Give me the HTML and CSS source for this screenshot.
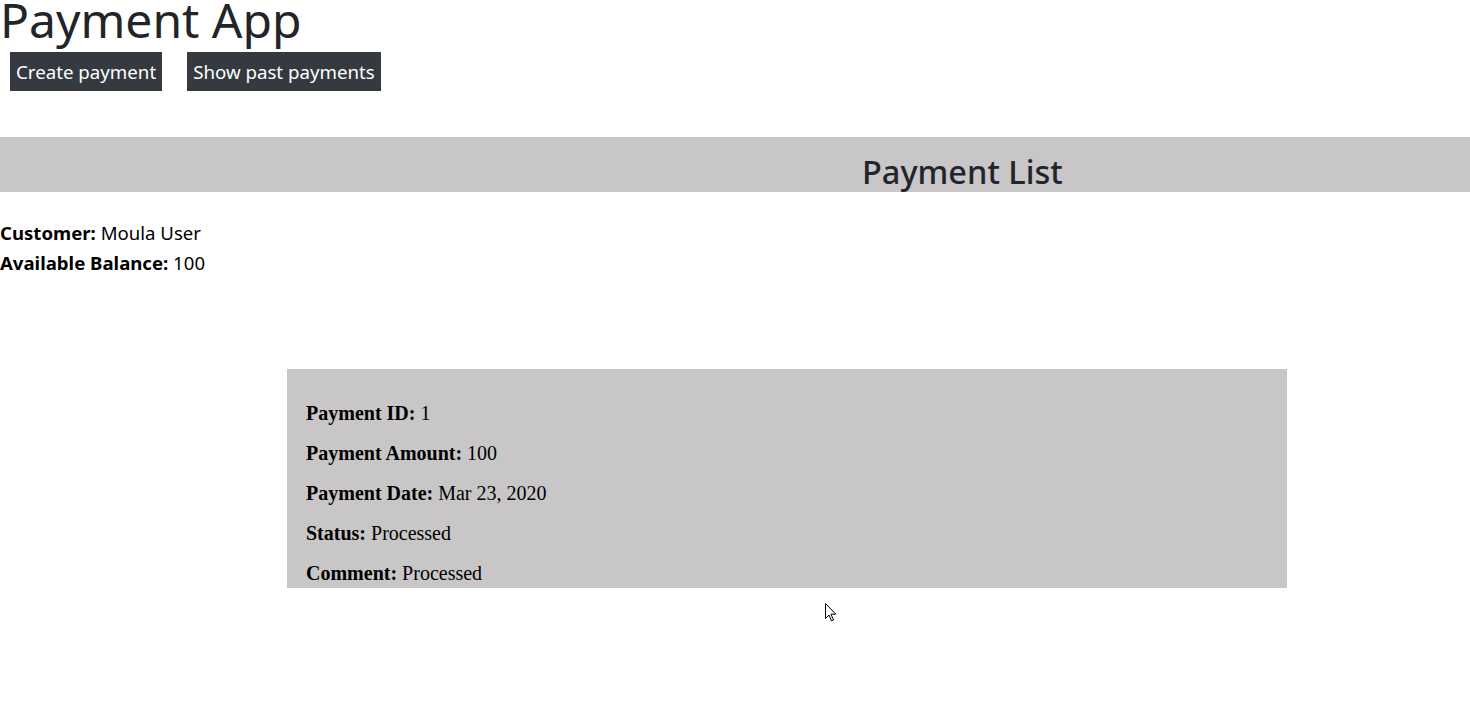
FILE: index.html
```html
<!DOCTYPE html>
<html lang="en">
<head>
<meta charset="utf-8">
<title>Payment App</title>
<link rel="stylesheet" href="styles.css">
</head>
<body>
<header class="app-header">
  <h1 class="app-title">Payment App</h1>
  <nav class="actions">
    <button class="btn">Create payment</button>
    <button class="btn">Show past payments</button>
  </nav>
</header>
<section class="list-banner">
  <h2 class="list-title">Payment List</h2>
</section>
<section class="customer">
  <div class="customer-line"><strong>Customer:</strong> Moula User</div>
  <div class="customer-line"><strong>Available Balance:</strong> 100</div>
</section>
<main class="payments">
  <article class="payment-card">
    <p class="field"><b>Payment ID:</b> 1</p>
    <p class="field"><b>Payment Amount:</b> 100</p>
    <p class="field"><b>Payment Date:</b> Mar 23, 2020</p>
    <p class="field"><b>Status:</b> Processed</p>
    <p class="field"><b>Comment:</b> Processed</p>
  </article>
</main>
<svg class="cursor" width="12" height="20" viewBox="0 0 12 20"><path d="M0.5 0.5 L0.5 15.5 L4 12 L6.5 18 L8.5 17 L6 11.2 L10.8 11.2 Z" fill="#fff" stroke="#000" stroke-width="1"/></svg>
</body>
</html>
```

FILE: styles.css
```css
html, body {
  margin: 0;
  padding: 0;
  background: #fff;
}
body {
  font-family: "Noto Sans", "Open Sans", sans-serif;
  color: #212529;
  position: relative;
  min-height: 721px;
}
.app-header {
  display: flex;
  flex-direction: column;
}
.app-title {
  margin: -13px 0 0 0;
  font-size: 48px;
  font-weight: 400;
  line-height: 65px;
  color: #212529;
}
.actions {
  display: flex;
  gap: 25px;
  padding-left: 10px;
  margin-top: 0;
}
.btn {
  font-family: "Noto Sans", "Open Sans", sans-serif;
  font-size: 18.7px;
  color: #fff;
  background: #343a40;
  border: none;
  border-radius: 0;
  height: 39px;
  padding: 0 6px;
  line-height: 39px;
}
.list-banner {
  margin-top: 46px;
  background: #c8c6c7;
  height: 55px;
  overflow: hidden;
}
.list-title {
  margin: 0;
  padding-left: 862px;
  font-size: 32.5px;
  font-weight: 500;
  line-height: 70px;
  color: #212529;
}
.customer {
  margin-top: 26px;
  font-size: 18.6px;
  color: #000;
}
.customer-line {
  line-height: 30px;
}
.customer-line strong {
  font-weight: 700;
}
.payments {
  display: flex;
  padding-left: 287px;
  margin-top: 91px;
}
.payment-card {
  width: 981px;
  background: #c8c6c7;
  padding: 34px 0 4px 19px;
  font-family: "Liberation Serif", "Times New Roman", serif;
  font-size: 20px;
  color: #000;
}
.field {
  margin: 0 0 19px 0;
  line-height: 21px;
}
.field:last-child {
  margin-bottom: 0;
}
.cursor {
  position: absolute;
  left: 825px;
  top: 603px;
}
```
